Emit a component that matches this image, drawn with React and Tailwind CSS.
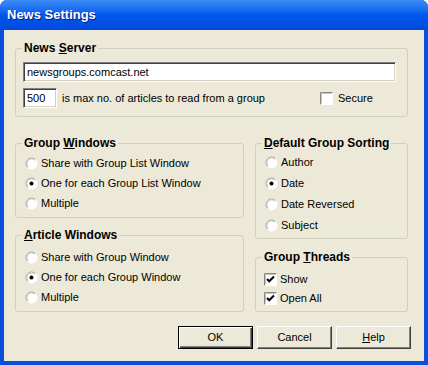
import React from 'react';

const Radio = ({ checked }) => (
    <svg width="13" height="13" viewBox="0 0 13 13" className="shrink-0">
        <circle cx="6.5" cy="6.5" r="6" fill="#ffffff" />
        <path d="M2.61 10.39 A5.5 5.5 0 0 1 10.39 2.61" fill="none" stroke="#9c998f" strokeWidth="1" />
        <path d="M3.32 9.68 A4.5 4.5 0 0 1 9.68 3.32" fill="none" stroke="#cfccc2" strokeWidth="1" />
        {checked && <circle cx="6.5" cy="6.5" r="2" fill="#000000" />}
    </svg>
);

const Check = ({ checked }) => (
    <svg width="13" height="13" viewBox="0 0 13 13" className="shrink-0">
        <rect x="0" y="0" width="13" height="13" fill="#ffffff" />
        <path d="M0.5 12.5 V0.5 H12.5" fill="none" stroke="#8a877d" strokeWidth="1" />
        <path d="M1.5 11.5 V1.5 H11.5" fill="none" stroke="#c4c1b6" strokeWidth="1" />
        {checked && <path d="M3 6 L5.2 8.3 L10 3.5" fill="none" stroke="#000000" strokeWidth="2" />}
    </svg>
);

const Group = ({ title, className, children }) => (
    <div className={`relative rounded-[3px] border border-[#d0d0bf] ${className}`}>
        <span className="absolute -top-[8px] left-[6px] bg-[#ece9d8] px-[2px] text-[12px] font-bold leading-[15px]">{title}</span>
        {children}
    </div>
);

const Option = ({ label, checked, box }) => (
    <div className="flex h-[20px] items-center gap-[3px]">
        {box ? <Check checked={checked} /> : <Radio checked={checked} />}
        <span>{label}</span>
    </div>
);

const Button = ({ children, primary }) => (
    <button
        className={
            primary
                ? 'h-[23px] w-[75px] border border-black bg-[#ece9d8] shadow-[inset_1px_1px_0_#ffffff,inset_-1px_-1px_0_#404040,inset_-2px_-2px_0_#808080]'
                : 'h-[23px] w-[75px] border border-b-[#404040] border-l-white border-r-[#404040] border-t-white bg-[#ece9d8] shadow-[inset_-1px_-1px_0_#808080]'
        }
    >
        {children}
    </button>
);

const sunken = 'border border-b-white border-l-[#808080] border-r-white border-t-[#808080] bg-white shadow-[inset_1px_1px_0_#404040,inset_-1px_-1px_0_#d4d0c8]';

export default function App() {
    return (
        <div className="h-[365px] w-[428px] bg-white font-['Liberation_Sans',Arial,sans-serif] text-[11px] text-black">
            <div className="flex h-full flex-col overflow-hidden rounded-t-[7px] bg-[#0a4fdc]">
                <div className="flex h-[30px] items-center bg-gradient-to-b from-[#3d8cf7] via-[#0058ee] to-[#0048dc] pl-[7px]">
                    <span className="font-bold text-[13px] text-white [text-shadow:1px_1px_0_#0a1e80]">News Settings</span>
                </div>
                <div className="mx-[4px] mb-[4px] flex-1 bg-[#ece9d8] pl-[11px] pr-[13px] pt-[18px]">
                    <Group
                        title={<>News <u>S</u>erver</>}
                        className="mr-[3px] h-[69px] pl-[7px] pr-[11px] pt-[13px]"
                    >
                        <div className={`flex h-[20px] items-center pl-[3px] ${sunken}`}>newsgroups.comcast.net</div>
                        <div className="mt-[6px] flex h-[20px] items-center">
                            <div className={`flex h-[20px] w-[34px] items-center pl-[3px] ${sunken}`}>500</div>
                            <span className="ml-[5px]">is max no. of articles to read from a group</span>
                            <div className="ml-auto flex w-[76px] items-center gap-[5px]">
                                <Check />
                                <span>Secure</span>
                            </div>
                        </div>
                    </Group>

                    <div className="mr-[3px] mt-[26px] flex gap-[11px]">
                        <div className="flex w-[229px] flex-col gap-[17px]">
                            <Group title={<>Group <u>W</u>indows</>} className="h-[75px] pl-[9px] pt-[9px]">
                                <Option label="Share with Group List Window" />
                                <Option label="One for each Group List Window" checked />
                                <Option label="Multiple" />
                            </Group>
                            <Group title={<><u>A</u>rticle Windows</>} className="h-[77px] pl-[9px] pt-[11px]">
                                <Option label="Share with Group Window" />
                                <Option label="One for each Group Window" checked />
                                <Option label="Multiple" />
                            </Group>
                        </div>
                        <div className="flex flex-1 flex-col gap-[18px]">
                            <Group title={<><u>D</u>efault Group Sorting</>} className="h-[96px] pl-[9px] pt-[8px] [&>div]:h-[21px]">
                                <Option label="Author" />
                                <Option label="Date" checked />
                                <Option label="Date Reversed" />
                                <Option label="Subject" />
                            </Group>
                            <Group title={<>Group <u>T</u>hreads</>} className="h-[55px] pl-[8px] pt-[12px] [&>div]:h-[19px]">
                                <Option label="Show" box checked />
                                <Option label="Open All" box checked />
                            </Group>
                        </div>
                    </div>

                    <div className="mt-[14px] flex justify-end gap-[4px]">
                        <Button primary>OK</Button>
                        <Button>Cancel</Button>
                        <Button><u>H</u>elp</Button>
                    </div>
                </div>
            </div>
        </div>
    );
}
